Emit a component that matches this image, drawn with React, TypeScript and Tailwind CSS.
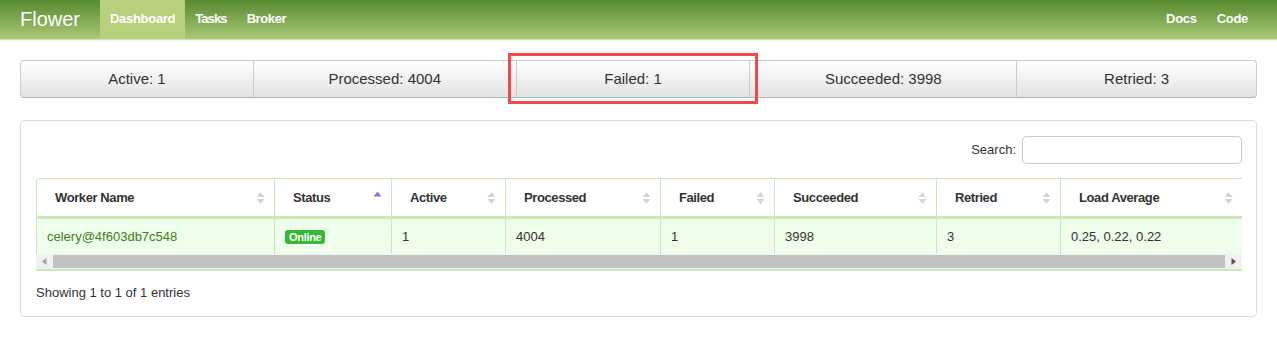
import React from 'react';

const STATS = [
  { label: 'Active: 1', grow: 'grow-[233]' },
  { label: 'Processed: 4004', grow: 'grow-[263]' },
  { label: 'Failed: 1', grow: 'grow-[234]' },
  { label: 'Succeeded: 3998', grow: 'grow-[267]' },
  { label: 'Retried: 3', grow: 'grow-[240]' },
];

const COLUMNS = [
  { name: 'Worker Name', w: 'w-[238px]', sort: 'both' },
  { name: 'Status', w: 'w-[117px]', sort: 'asc' },
  { name: 'Active', w: 'w-[114px]', sort: 'both' },
  { name: 'Processed', w: 'w-[155px]', sort: 'both' },
  { name: 'Failed', w: 'w-[114px]', sort: 'both' },
  { name: 'Succeeded', w: 'w-[162px]', sort: 'both' },
  { name: 'Retried', w: 'w-[124px]', sort: 'both' },
  { name: 'Load Average', w: 'flex-1', sort: 'both' },
];

function SortIcon({ kind }: { kind: string }) {
  if (kind === 'asc') {
    return (
      <svg width="9" height="14" viewBox="0 0 9 14" className="shrink-0">
        <path d="M0.5 5.5 L4.5 0.5 L8.5 5.5 Z" fill="#7b7bd6" />
      </svg>
    );
  }
  return (
    <svg width="9" height="16" viewBox="0 0 9 16" className="shrink-0">
      <path d="M0.5 7 L4.5 2 L8.5 7 Z" fill="#d6d6d6" />
      <path d="M0.5 9 L4.5 14 L8.5 9 Z" fill="#d6d6d6" />
    </svg>
  );
}

export default function App() {
  const row = ['celery@4f603db7c548', 'online', '1', '4004', '1', '3998', '3', '0.25, 0.22, 0.22'];

  return (
    <div className="relative w-[1277px] h-[337px] bg-white overflow-hidden text-[#333] font-['Liberation_Sans',Arial,sans-serif]">
      {/* Navbar */}
      <div className="h-[40px] flex items-stretch justify-between bg-gradient-to-b from-[#578a2e] to-[#abc977] border-b border-[#d2e0b8] shadow-[0_1px_2px_rgba(0,0,0,0.08)]">
        <div className="flex items-stretch">
          <div className="pl-[20px] pr-[20px] flex items-center text-[20px] text-white pb-[2px]">Flower</div>
          <div className="flex items-center px-[10px] bg-[#b8cf7b] text-white text-[13px] font-bold tracking-[-0.3px] pb-[2px]">Dashboard</div>
          <div className="flex items-center px-[10px] text-white text-[13px] font-bold tracking-[-0.9px] pb-[2px]">Tasks</div>
          <div className="flex items-center px-[10px] text-white text-[13px] font-bold tracking-[-0.4px] pb-[2px]">Broker</div>
        </div>
        <div className="flex items-stretch pr-[19px]">
          <div className="flex items-center px-[10px] text-white text-[13px] font-bold tracking-[-0.3px] pb-[2px]">Docs</div>
          <div className="flex items-center px-[10px] text-white text-[13px] font-bold tracking-[-0.3px] pb-[2px]">Code</div>
        </div>
      </div>

      <div className="px-[20px] pt-[20px]">
        {/* Stat buttons */}
        <div className="flex h-[38px]">
          {STATS.map((s, i) => (
            <div
              key={s.label}
              className={`${s.grow} basis-0 flex items-center justify-center text-[15px] text-[#333] border border-[#cccccc] border-b-[#b5b5b5] bg-gradient-to-b from-white to-[#e3e3e3] ${
                i === 0 ? 'rounded-l-[4px]' : '-ml-px'
              } ${i === STATS.length - 1 ? 'rounded-r-[4px]' : ''}`}
            >
              {s.label}
            </div>
          ))}
        </div>

        {/* Panel */}
        <div className="mt-[22px] h-[197px] border border-[#dddddd] rounded-[4px] pl-[15px] pr-[14px] pt-[15px]">
          <div className="flex justify-end items-center gap-[6px]">
            <span className="text-[13px]">Search:</span>
            <div className="w-[220px] h-[28px] border border-[#cccccc] rounded-[4px] bg-white" />
          </div>

          {/* Table */}
          <div className="mt-[14px]">
            <div className="flex h-[41px] border-t border-l border-[#c9e9b9] border-b-[3px] rounded-tl-[4px] bg-white">
              {COLUMNS.map(c => (
                <div
                  key={c.name}
                  className={`${c.w} flex items-center justify-between pl-[18px] pr-[9px] border-r border-[#c9e9b9] last:border-r-0 text-[13px] font-bold tracking-[-0.4px]`}
                >
                  <span>{c.name}</span>
                  <SortIcon kind={c.sort} />
                </div>
              ))}
            </div>
            <div className="flex h-[35px] bg-[#effeea] border-l border-[#c9e9b9]">
              {COLUMNS.map((c, i) => (
                <div
                  key={c.name}
                  className={`${c.w} flex items-center pl-[10px] border-r border-[#c9e9b9] last:border-r-0 text-[13px]`}
                >
                  {i === 0 ? (
                    <span className="text-[#3f7f22]">{row[0]}</span>
                  ) : i === 1 ? (
                    <span className="bg-[#36b936] text-white text-[11px] font-bold leading-[14px] px-[4px] rounded-[3px] tracking-[-0.3px]">
                      Online
                    </span>
                  ) : (
                    <span>{row[i]}</span>
                  )}
                </div>
              ))}
            </div>
            {/* Scrollbar */}
            <div className="flex h-[15px] bg-[#f1f1f1] border-b-2 border-[#c9e9b9] box-content">
              <div className="w-[17px] flex items-center justify-center">
                <svg width="5" height="7" viewBox="0 0 5 7">
                  <path d="M4.5 0 L0 3.5 L4.5 7 Z" fill="#a3a3a3" />
                </svg>
              </div>
              <div className="flex-1 my-[1px] bg-[#c1c1c1]" />
              <div className="w-[17px] flex items-center justify-center">
                <svg width="5" height="7" viewBox="0 0 5 7">
                  <path d="M0.5 0 L5 3.5 L0.5 7 Z" fill="#505050" />
                </svg>
              </div>
            </div>
          </div>

          <div className="mt-[12px] text-[13px]">Showing 1 to 1 of 1 entries</div>
        </div>
      </div>

      {/* Annotation highlight */}
      <div className="absolute left-[508px] top-[53px] w-[250px] h-[51px] border-[3px] border-[#f24a4a]" />
    </div>
  );
}
